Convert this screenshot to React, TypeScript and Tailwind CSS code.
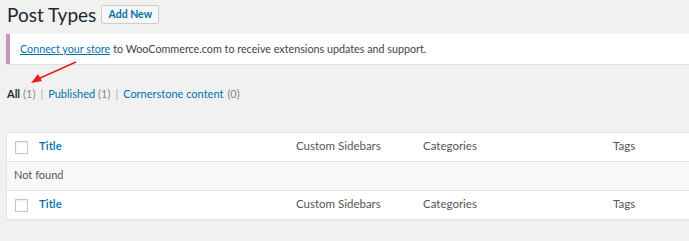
import React from 'react';

const cols = 'grid grid-cols-[32px_257px_127px_190px_1fr] items-center';

function Checkbox() {
  return <span className="block w-[13px] h-[13px] border border-[#c3c7cb] bg-white shadow-[inset_0_1px_2px_rgba(0,0,0,0.08)]" />;
}

function HeadRow({ last }: { last?: boolean }) {
  return (
    <div className={`${cols} h-[29px] pb-[2px] bg-white text-[11.5px] ${last ? 'border-t border-[#e1e1e1]' : 'border-b border-[#e1e1e1]'}`}>
      <div className="pl-[8px] pt-[2px]"><Checkbox /></div>
      <div className="text-[#0073aa] font-semibold">Title</div>
      <div className="text-[#555]">Custom Sidebars</div>
      <div className="text-[#555]">Categories</div>
      <div className="text-[#555]">Tags</div>
    </div>
  );
}

export default function App() {
  return (
    <div className="relative w-[689px] h-[241px] overflow-hidden bg-[#f1f1f1] font-['Lato',sans-serif] text-[11px] text-[#444]">
      <div className="w-[740px] pl-[6px]">
        <div className="flex items-center h-[30px] pl-px gap-[5px]">
          <h1 className="text-[19px] leading-none text-[#23282d] pb-[2px]">Post Types</h1>
          <button className="h-[19px] w-[58px] border border-[#ccc] rounded-[2px] bg-[#f7f7f7] text-[10.5px] font-bold leading-none text-[#0073aa] mb-[1px]">Add New</button>
        </div>

        <div className="mt-[4px] h-[30px] flex items-center pl-[10px] bg-white border-l-4 border-[#c594bd] shadow-[0_1px_1px_rgba(0,0,0,0.06)] text-[10.75px]">
          <a className="text-[#0073aa] underline">Connect your store</a>
          <span className="ml-[3px] text-[#444]">to WooCommerce.com to receive extensions updates and support.</span>
        </div>

        <div className="mt-[21px] h-[18px] flex items-center pl-px">
          <span className="font-bold text-[#23282d]">All</span>
          <span className="ml-[3px] text-[#888]">(1)</span>
          <span className="mx-[5px] text-[#aaa]">|</span>
          <span className="text-[#0073aa]">Published</span>
          <span className="ml-[3px] text-[#888]">(1)</span>
          <span className="mx-[5px] text-[#aaa]">|</span>
          <span className="text-[#0073aa]">Cornerstone content</span>
          <span className="ml-[4px] text-[#888]">(0)</span>
        </div>

        <div className="mt-[29px] border border-[#e5e5e5] shadow-[0_1px_1px_rgba(0,0,0,0.04)]">
          <HeadRow />
          <div className="h-[28px] pb-[2px] flex items-center pl-[7px] bg-[#f9f9f9] text-[#555]">Not found</div>
          <HeadRow last />
        </div>
      </div>

      <svg className="absolute left-0 top-0" width="120" height="100" viewBox="0 0 120 100">
        <line x1="76" y1="62" x2="38" y2="79" stroke="#e8201c" strokeWidth="1.6" />
        <polygon points="31,83 38,74 42,81" fill="#e8201c" />
      </svg>
    </div>
  );
}
